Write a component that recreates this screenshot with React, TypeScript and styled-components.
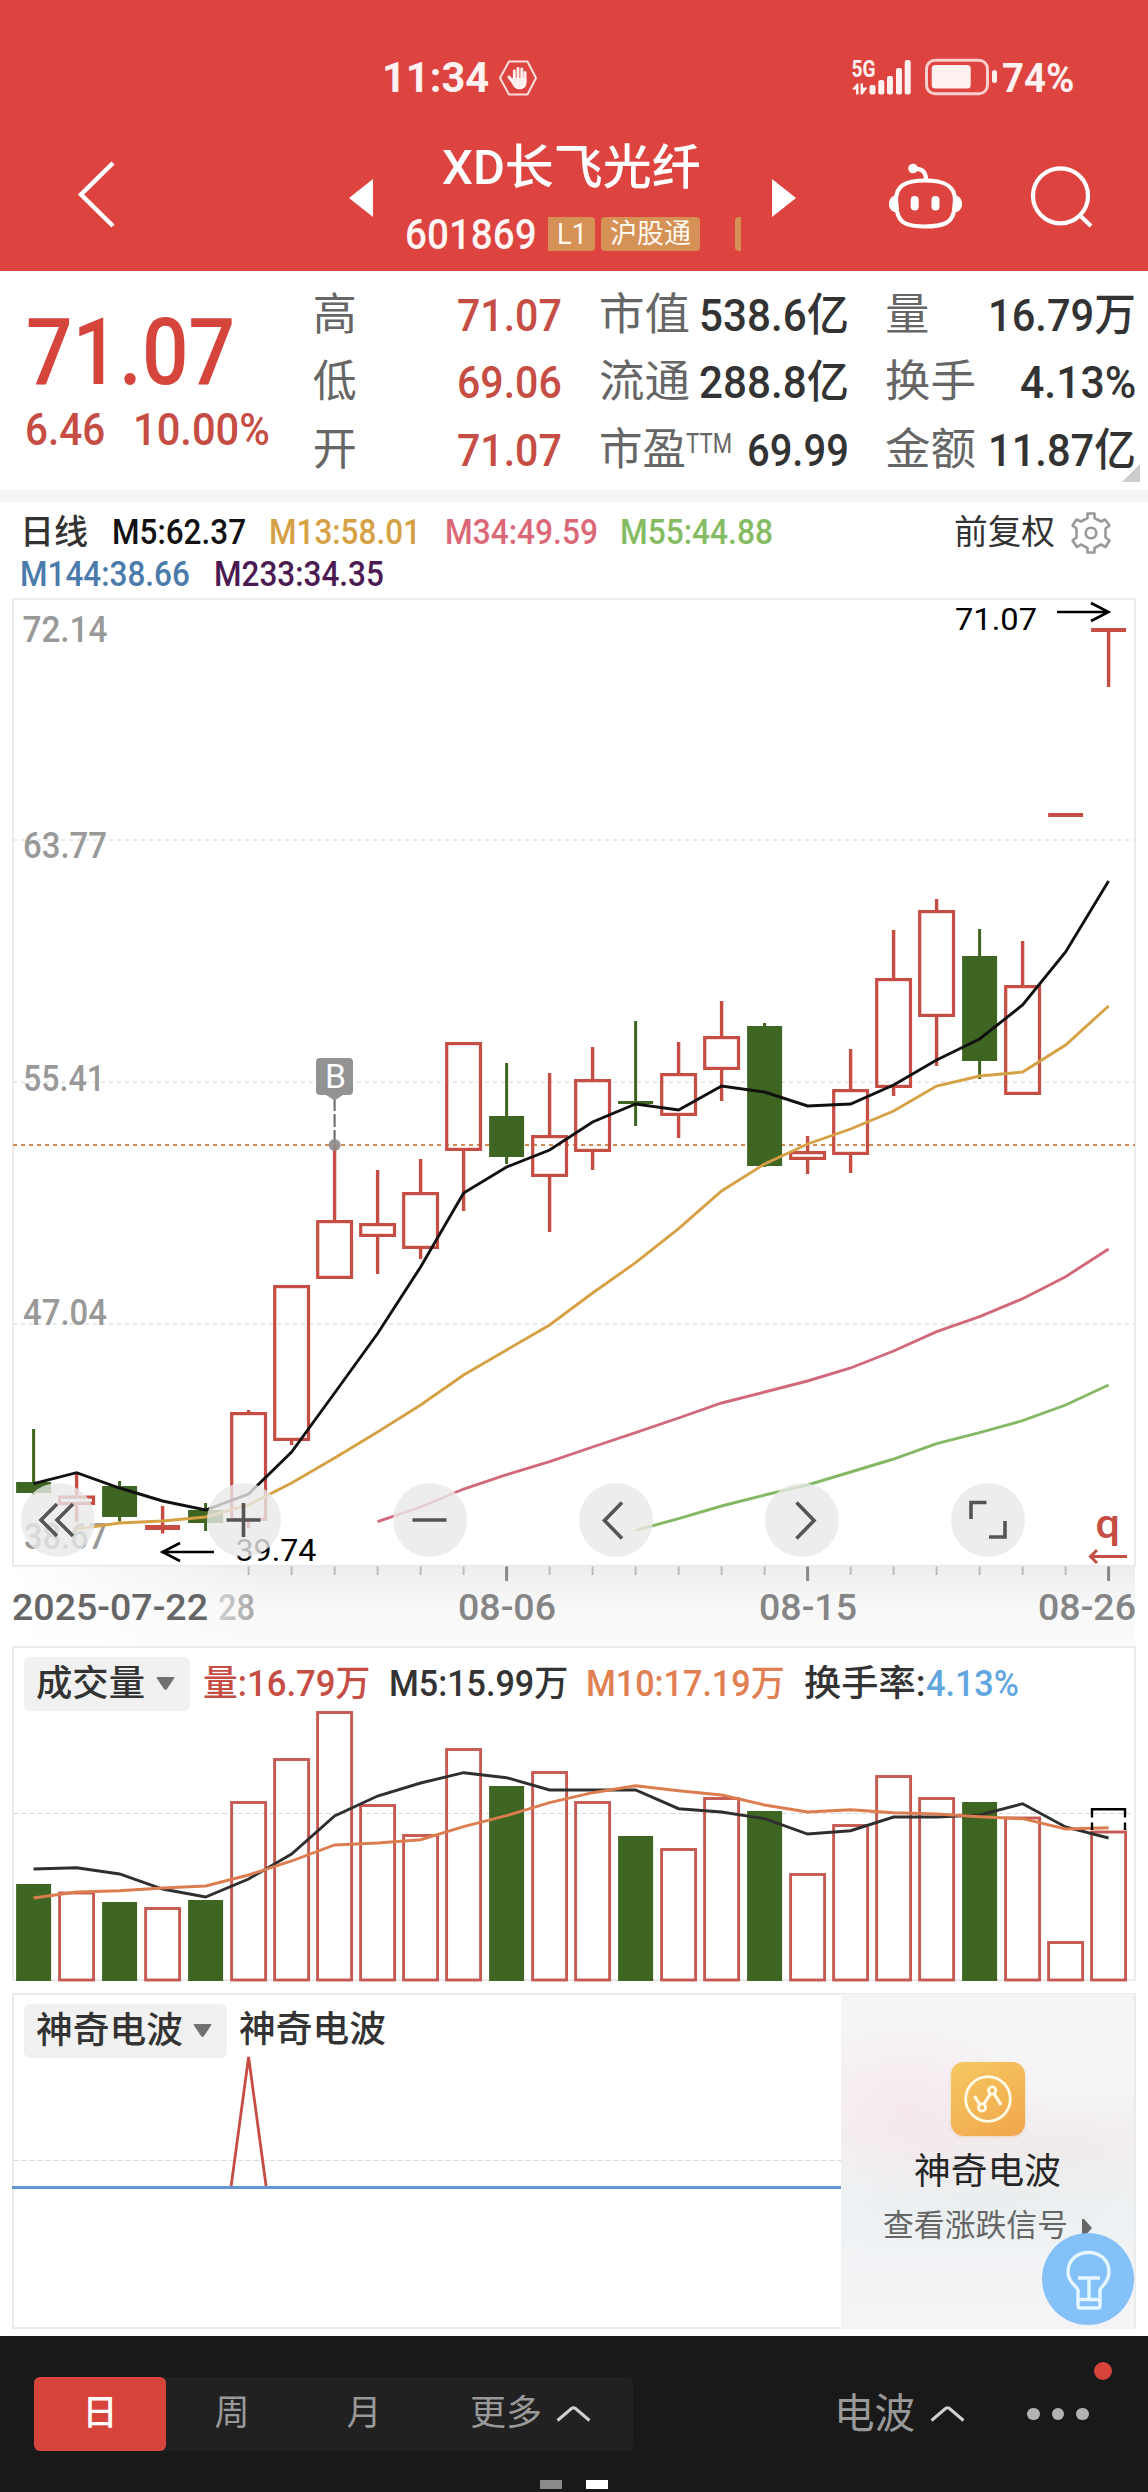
import React, { useLayoutEffect, useRef, useState } from "react";
import styled, { createGlobalStyle } from "styled-components";

const FONT = `Roboto, "Noto Sans CJK SC", sans-serif`;
const RED = "#c64d44";
const GREEN = "#3f6522";
const INK = "#333333";

const GlobalStyle = createGlobalStyle`
  * { box-sizing: border-box; }
  body { margin: 0; background: #fff; font-family: ${FONT}; }
  svg { display: block; flex: none; }
`;

/* ---------- condensed text: squeezes a line to the width it is given ---------- */

const FitBox = styled.span<{ $w: number; $size: number; $color: string; $weight: number; $lh?: number; $ml?: number }>`
  display: block;
  flex: none;
  width: ${(p) => p.$w}px;
  margin-left: ${(p) => p.$ml ?? 0}px;
  font-size: ${(p) => p.$size}px;
  font-weight: ${(p) => p.$weight};
  line-height: ${(p) => p.$lh ?? Math.round(p.$size * 1.2)}px;
  color: ${(p) => p.$color};
`;
const FitInner = styled.span`
  display: inline-block;
  vertical-align: top;
  white-space: nowrap;
  transform-origin: 0 50%;
`;

type FitProps = { w: number; size: number; color?: string; weight?: number; lh?: number; ml?: number; children: React.ReactNode };
function Fit({ w, size, color = INK, weight = 500, lh, ml, children }: FitProps) {
  const ref = useRef<HTMLSpanElement>(null);
  const [scale, setScale] = useState(1);
  useLayoutEffect(() => {
    if (ref.current) setScale(w / ref.current.offsetWidth);
  }, [w, size]);
  return (
    <FitBox $w={w} $size={size} $color={color} $weight={weight} $lh={lh} $ml={ml}>
      <FitInner ref={ref} style={{ transform: `scaleX(${scale})` }}>{children}</FitInner>
    </FitBox>
  );
}

/* ---------- header ---------- */

const Screen = styled.main`
  width: 1148px;
  height: 2492px;
  display: flex;
  flex-direction: column;
  background: #fff;
  overflow: hidden;
`;
const Header = styled.header`
  height: 271px;
  flex: none;
  background: #dd4440;
  padding-top: 54px;
`;
const StatusBar = styled.div`
  height: 48px;
  padding: 0 74px 0 382px;
  display: flex;
  align-items: center;
`;
const Spacer = styled.div`
  flex: 1;
`;
const NavRow = styled.nav`
  display: flex;
  align-items: flex-start;
  padding: 32px 54px 0 77px;
`;
const NavIcon = styled.div<{ $mt: number; $ml: number }>`
  margin: ${(p) => p.$mt}px 0 0 ${(p) => p.$ml}px;
`;
const TitleBlock = styled.div`
  width: 399px;
  display: flex;
  flex-direction: column;
`;
const TitleLine = styled.div`
  height: 66px;
  padding: 2px 0 0 69px;
`;
const CodeLine = styled.div`
  margin-top: 17px;
  height: 34px;
  padding-left: 32px;
  display: flex;
  align-items: center;
`;
const Tag = styled.div<{ $w: number; $ml: number; $r: string }>`
  width: ${(p) => p.$w}px;
  height: 34px;
  margin-left: ${(p) => p.$ml}px;
  border-radius: ${(p) => p.$r};
  background: #d69156;
  display: flex;
  align-items: center;
  justify-content: center;
`;

function StatusIcons() {
  return (
    <svg width="151" height="48" viewBox="850 54 151 48" fill="#fff1f0">
      <text x="851.5" y="76.5" fontFamily={FONT} fontWeight="700" fontSize="23" textLength="24" lengthAdjust="spacingAndGlyphs">5G</text>
      <path d="M852 89.500 L857 83.500 H858.500 V94.500 H856 V89.500 Z M860.500 83.500 H863 V87.500 H867.500 L862.500 94.500 H860.500 Z" />
      <rect x="869.5" y="85" width="6" height="9.5" rx="2" />
      <rect x="878.3" y="80" width="6" height="14.5" rx="2" />
      <rect x="887" y="76" width="6" height="18.5" rx="2" />
      <rect x="896" y="68" width="6" height="26.5" rx="2" />
      <rect x="904.7" y="60" width="6" height="34.5" rx="2" />
      <rect x="926.5" y="60.3" width="61" height="33.4" rx="8.5" fill="none" stroke="#f9cfcd" strokeWidth="3" />
      <rect x="931.7" y="65" width="39" height="23.5" rx="3.5" />
      <rect x="992" y="70" width="5" height="13" rx="2.5" />
    </svg>
  );
}

function HandIcon() {
  return (
    <svg width="40" height="38" viewBox="498 59 40 38">
      <path d="M509 61.5 H527.5 L536 78 L527.5 94.5 H509 L500 78 Z" fill="none" stroke="#fbdedd" strokeWidth="2" strokeLinejoin="round" />
      <path d="M509 77 L514.5 84" stroke="#fff1f0" strokeWidth="3" strokeLinecap="round" />
      <path d="M514.3 71 V80 M518 68.5 V80 M521.8 69 V80 M525 72.5 V82" stroke="#fff1f0" strokeWidth="2.9" strokeLinecap="round" />
      <path d="M512.5 78 H526.4 V83 C526.4 87 523.5 89.3 519 89.3 C515.5 89.3 512.8 86.5 511.5 82 Z" fill="#fff1f0" />
    </svg>
  );
}

/* ---------- quote panel ---------- */

const Quote = styled.section`
  height: 219px;
  flex: none;
  position: relative;
  display: flex;
  padding: 11px 12px 0 27px;
`;
const PriceCol = styled.div`
  width: 287px;
  padding-top: 21px;
`;
const ChangeRow = styled.div`
  display: flex;
`;
const StatCol = styled.div<{ $w: number; $ml: number }>`
  width: ${(p) => p.$w}px;
  margin-left: ${(p) => p.$ml}px;
`;
const StatRow = styled.div`
  height: 67.3px;
  display: flex;
  align-items: center;
`;
const Corner = styled.i`
  position: absolute;
  right: 8px;
  bottom: 8px;
  border-style: solid;
  border-width: 0 0 18px 18px;
  border-color: transparent transparent #cccccc transparent;
`;
const Divider = styled.div`
  height: 12px;
  flex: none;
  background: #f4f4f4;
`;

type Stat = { k: string; kw: number; v: string; vw: number; red?: boolean; sup?: boolean };
const stats: Stat[][] = [
  [
    { k: "高", kw: 44, v: "71.07", vw: 105, red: true },
    { k: "低", kw: 44, v: "69.06", vw: 105, red: true },
    { k: "开", kw: 44, v: "71.07", vw: 105, red: true },
  ],
  [
    { k: "市值", kw: 91, v: "538.6亿", vw: 150 },
    { k: "流通", kw: 91, v: "288.8亿", vw: 150 },
    { k: "市盈", kw: 87, v: "69.99", vw: 102, sup: true },
  ],
  [
    { k: "量", kw: 44, v: "16.79万", vw: 148 },
    { k: "换手", kw: 91, v: "4.13%", vw: 116 },
    { k: "金额", kw: 91, v: "11.87亿", vw: 148 },
  ],
];
const Sup = styled.div`
  align-self: flex-start;
  margin-top: 10px;
`;

/* ---------- moving average legend ---------- */

const Legend = styled.section`
  height: 96px;
  flex: none;
  padding: 9px 36px 0 20px;
`;
const LegendRow = styled.div<{ $h: number }>`
  height: ${(p) => p.$h}px;
  display: flex;
  align-items: center;
`;

/* ---------- chart geometry ---------- */

const cx = (i: number) => 33.6 + 43 * i;
type Candle = [up: 0 | 1, high: number, top: number, bottom: number, low: number];
const candles: Candle[] = [
  [0, 1429, 1482, 1493, 1495], [1, 1473, 1495.5, 1505, 1522], [0, 1481, 1486, 1517, 1521.5],
  [1, 1506, 1525, 1530, 1533.5], [0, 1503, 1510, 1523, 1531], [1, 1410, 1412, 1521, 1528],
  [1, 1285, 1285, 1441, 1445], [1, 1145, 1220, 1279, 1279], [1, 1170, 1223, 1237, 1274],
  [1, 1159, 1192, 1249, 1259], [1, 1042, 1042, 1151, 1211], [0, 1063, 1116, 1157, 1164],
  [1, 1073, 1135, 1177, 1232], [1, 1047, 1079, 1152, 1170], [0, 1021, 1101, 1104, 1126],
  [1, 1042, 1073, 1116, 1138], [1, 1001, 1036, 1070, 1101], [0, 1023, 1026, 1166, 1167],
  [1, 1136, 1151, 1160, 1174], [1, 1049, 1089, 1155, 1173], [1, 930, 978, 1088, 1096],
  [1, 899, 910, 1017, 1066], [0, 929, 956, 1061, 1079], [1, 941, 985, 1095, 1095],
  [1, 813, 813, 817, 817], [1, 628, 628, 632, 687],
];
const ma5 = [1483.7, 1472.7, 1488, 1501, 1510, 1494, 1452, 1393, 1333.5, 1267, 1193, 1167, 1150, 1122, 1104, 1110, 1086, 1092, 1106, 1104, 1085, 1060, 1039, 1005, 952, 881];
const ma13 = [1529, 1523, 1521, 1517, 1505, 1483, 1458, 1432, 1405, 1375, 1350, 1325, 1293, 1262.7, 1228.7, 1191, 1164, 1144, 1129, 1111, 1086, 1076, 1072, 1045, 1006];
const ma34 = [1521.6, 1507, 1489, 1474.7, 1461.6, 1447, 1432.7, 1418, 1403, 1392, 1381, 1368, 1351, 1331.7, 1316.7, 1298.7, 1276.7, 1249];
const ma55 = [1530.3, 1518.7, 1506, 1495, 1485, 1472, 1459, 1443.7, 1432.7, 1420.7, 1405, 1385];
const pts = (ys: number[], start: number) => ys.map((y, i) => `${cx(start + i)},${y}`).join(" ");

type LabelProps = { x: number; y: number; w: number; size: number; fill: string; weight?: number; children: React.ReactNode };
const Label = ({ x, y, w, size, fill, weight = 500, children }: LabelProps) => (
  <text x={x} y={y} fontFamily={FONT} fontSize={size} fontWeight={weight} fill={fill} textLength={w} lengthAdjust="spacingAndGlyphs">{children}</text>
);

function CandleMark({ i, c }: { i: number; c: Candle }) {
  const [up, high, top, bottom, low] = c;
  const x = cx(i);
  if (!up)
    return (
      <g fill={GREEN}>
        <rect x={x - 1.5} y={high} width="3" height={low - high} />
        <rect x={x - 17.5} y={top} width="35" height={bottom - top} />
      </g>
    );
  const thin = bottom - top < 8;
  return (
    <g>
      {top > high && <rect x={x - 1.7} y={high} width="3.4" height={top - high} fill={RED} />}
      {low > bottom && <rect x={x - 1.7} y={bottom} width="3.4" height={low - bottom} fill={RED} />}
      {thin ? (
        <rect x={x - 17.5} y={top} width="35" height={bottom - top} fill={RED} />
      ) : (
        <rect x={x - 16.9} y={top + 1.6} width="33.8" height={bottom - top - 3.2} fill="none" stroke={RED} strokeWidth="3.2" />
      )}
    </g>
  );
}

const ChartArea = styled.section`
  height: 1048px;
  flex: none;
  position: relative;
`;
const Controls = styled.div`
  position: absolute;
  left: 21px;
  top: 885px;
  display: flex;
  gap: 112px;
`;
const RoundButton = styled.button`
  width: 74px;
  height: 74px;
  padding: 0;
  border: 0;
  border-radius: 50%;
  background: rgba(232, 232, 232, 0.8);
  svg { fill: none; stroke: #555; stroke-width: 3.6; }
`;
const controlPaths = [
  "M36 21 L20 37 L36 53 M52 21 L36 37 L52 53",
  "M19.5 37 H53.5 M36.5 20 V54",
  "M19.5 37 H53.5",
  "M43 19.5 L25.5 37.5 L43 55.5",
  "M31.5 19.5 L49 37.5 L31.5 55.5",
  "M35.5 19.5 H20 V36 M38 54 H54 V38",
];

function PriceChart() {
  return (
    <svg width="1148" height="1048" viewBox="0 598 1148 1048">
      <defs>
        <linearGradient id="axisV" x1="0" y1="0" x2="0" y2="1">
          <stop offset="0" stopColor="#eeeeee" />
          <stop offset="0.5" stopColor="#f8f8f8" />
          <stop offset="1" stopColor="#fafafa" />
        </linearGradient>
        <linearGradient id="axisH" x1="0" y1="0" x2="1" y2="0">
          <stop offset="0" stopColor="#fff" />
          <stop offset="1" stopColor="#fff" stopOpacity="0" />
        </linearGradient>
        <linearGradient id="fade28" x1="0" y1="0" x2="1" y2="0">
          <stop offset="0" stopColor="#d2d2d2" />
          <stop offset="1" stopColor="#a6a6a6" />
        </linearGradient>
      </defs>
      <rect x="14" y="1566" width="1121" height="80" fill="url(#axisV)" />
      <rect x="13" y="1566" width="250" height="80" fill="url(#axisH)" />
      <rect x="13" y="599.2" width="1122" height="966.6" fill="none" stroke="#ebebeb" strokeWidth="2" />
      {[840, 1082, 1324].map((y) => (
        <path key={y} d={`M13 ${y} H1135`} stroke="#e9e9e9" strokeWidth="2" strokeDasharray="4 4" />
      ))}
      <path d="M13 1145 H1135" stroke="#cf8a56" strokeWidth="2" strokeDasharray="4 4" />
      {candles.map((c, i) => <CandleMark key={i} i={i} c={c} />)}
      <Label x={22.5} y={642} w={85} size={36} fill="#999">72.14</Label>
      <Label x={23} y={858} w={84} size={36} fill="#999">63.77</Label>
      <Label x={23} y={1091.3} w={82} size={36} fill="#999">55.41</Label>
      <Label x={23} y={1324.5} w={84} size={36} fill="#999">47.04</Label>
      <Label x={24} y={1548.5} w={83} size={36} fill="#999">38.67</Label>
      <g fill="none" strokeWidth="2.9">
        <polyline points={pts(ma5, 0)} stroke="#111" />
        <polyline points={pts(ma13, 1)} stroke="#d6a145" />
        <polyline points={pts(ma34, 8)} stroke="#d2697a" />
        <polyline points={pts(ma55, 14)} stroke="#85b865" />
      </g>
      <path d="M334.6 1098 V1145" stroke="#666" strokeWidth="2" strokeDasharray="13 3" />
      <circle cx="334.6" cy="1145" r="6" fill="#8d8d8d" opacity="0.9" />
      <path d="M320 1058 H349 Q353 1058 353 1062 V1091 Q353 1095 349 1095 H343 L334.6 1100.5 L326 1095 H320 Q316 1095 316 1091 V1062 Q316 1058 320 1058 Z" fill="#939393" />
      <Label x={325} y={1087.5} w={21} size={33} fill="#fff" weight={400}>B</Label>
      <Label x={955} y={629.8} w={82} size={32} fill="#000" weight={400}>71.07</Label>
      <path d="M1057 612 H1108 M1091 603 L1108.5 612 L1091 621" stroke="#000" strokeWidth="2.6" fill="none" />
      <Label x={235.5} y={1561} w={81} size={31} fill="#000" weight={400}>39.74</Label>
      <path d="M214 1552 H163 M180 1543 L162.5 1552 L180 1561" stroke="#000" strokeWidth="2.6" fill="none" />
      <Label x={1095.5} y={1537.5} w={24.5} size={40} fill={RED}>q</Label>
      <path d="M1127 1556.5 H1091 M1097 1550 L1090.5 1556.5 L1097 1563" stroke={RED} strokeWidth="3" fill="none" />
      {Array.from({ length: 21 }, (_, k) => k + 5).map((i) => {
        const major = i === 11 || i === 18 || i === 25;
        return <path key={i} d={`M${cx(i)} 1566.5 V${major ? 1581 : 1575}`} stroke={major ? "#888" : "#bbb"} strokeWidth={major ? 3 : 2} />;
      })}
      <Label x={12} y={1619.7} w={196} size={36} fill="#666">2025-07-22</Label>
      <Label x={218} y={1619.7} w={37} size={36} fill="url(#fade28)">28</Label>
      <Label x={458} y={1619.7} w={98} size={36} fill="#858585">08-06</Label>
      <Label x={759} y={1619.7} w={98} size={36} fill="#858585">08-15</Label>
      <Label x={1038} y={1619.7} w={98} size={36} fill="#858585">08-26</Label>
    </svg>
  );
}

/* ---------- indicator panes ---------- */

const Pane = styled.section<{ $h: number; $mt: number }>`
  height: ${(p) => p.$h}px;
  margin: ${(p) => p.$mt}px 12px 0 12px;
  flex: none;
  display: flex;
  flex-direction: column;
  border: 2px solid #ebebeb;
`;
const PaneHead = styled.div<{ $pt: number; $h: number }>`
  height: ${(p) => p.$h}px;
  padding: ${(p) => p.$pt}px 0 0 10px;
  display: flex;
`;
const Chip = styled.div<{ $w: number }>`
  width: ${(p) => p.$w}px;
  height: 54px;
  border-radius: 6px;
  background: #f1f1f1;
  display: flex;
  align-items: center;
  justify-content: space-between;
  padding: 0 15px 0 12px;
`;
const Caret = () => (
  <svg width="19" height="14" viewBox="0 0 19 14"><path d="M1.5 0 H17.5 Q19 0 18 1.6 L11 12 Q9.5 14 8 12 L1 1.6 Q0 0 1.5 0 Z" fill="#707070" /></svg>
);

const volumes: [up: 0 | 1, top: number][] = [
  [0, 1884], [1, 1891.5], [0, 1902], [1, 1907], [0, 1900], [1, 1801], [1, 1758], [1, 1711], [1, 1804],
  [1, 1834], [1, 1748], [0, 1786], [1, 1771], [1, 1801], [0, 1836], [1, 1848], [1, 1797], [0, 1811],
  [1, 1873], [1, 1824], [1, 1775], [1, 1797], [0, 1802], [1, 1816.5], [1, 1941], [1, 1830.5],
];
const v5 = [1869, 1867.7, 1874, 1889, 1897, 1879, 1854, 1816, 1796, 1783, 1772.7, 1777.7, 1790, 1790, 1790, 1808.7, 1812, 1818.7, 1834, 1830.7, 1817, 1817, 1815, 1803.7, 1827, 1838];
const v10 = [1898, 1892, 1890.7, 1888, 1886, 1875, 1861, 1845, 1843, 1839.7, 1826.7, 1815.7, 1802.7, 1792.7, 1785.7, 1790.7, 1795, 1805, 1812, 1809.7, 1812.7, 1814, 1816.7, 1818.7, 1829, 1827.7];

function VolumeChart() {
  return (
    <svg width="1120" height="274" viewBox="14 1709 1120 274" overflow="visible">
      <path d="M14 1813.5 H1134" stroke="#d6d6d6" strokeWidth="1.2" strokeDasharray="5 3" />
      {volumes.map(([up, top], i) =>
        up ? (
          <rect key={i} x={cx(i) - 17} y={top + 1.5} width="34" height={1980 - top - 1.5} fill="none" stroke="#c65a52" strokeWidth="2.9" />
        ) : (
          <rect key={i} x={cx(i) - 17.5} y={top} width="35" height={1981 - top} fill={GREEN} />
        )
      )}
      <g fill="none" strokeWidth="2.9">
        <polyline points={pts(v5, 0)} stroke="#2f2f2f" />
        <polyline points={pts(v10, 0)} stroke="#dc7d50" />
      </g>
      <path d="M1092 1817.5 V1809.3 H1125 V1817.5 M1092 1822.5 V1830 M1125 1822.5 V1830" stroke="#000" strokeWidth="2.4" fill="none" />
    </svg>
  );
}

const WaveBody = styled.div`
  display: flex;
  height: 333px;
`;
const WaveMain = styled.div`
  width: 827px;
  flex: none;
`;
const Promo = styled.div`
  width: 293px;
  height: 335px;
  margin-top: -1px;
  position: relative;
  padding-top: 68px;
  display: flex;
  flex-direction: column;
  align-items: center;
  background:
    radial-gradient(ellipse 140px 90px at 22% 34%, rgba(245, 228, 235, 0.7), transparent),
    radial-gradient(ellipse 260px 60px at 70% 46%, rgba(238, 232, 231, 0.8), transparent),
    radial-gradient(ellipse 260px 60px at 50% 62%, rgba(230, 237, 238, 0.8), transparent),
    linear-gradient(#f5f5f5, #f6f4f6 30%, #f1f3f5 75%, #f5f3f6);
`;
const PromoIcon = styled.div`
  width: 74px;
  height: 74px;
  border-radius: 13px;
  background: linear-gradient(150deg, #f5c860, #f1a64c);
  box-shadow: 0 1px 3px rgba(200, 160, 80, 0.3);
`;
const PromoSub = styled.div`
  display: flex;
  align-items: center;
`;
const Bulb = styled.div`
  position: absolute;
  right: 0;
  bottom: 4px;
  width: 92px;
  height: 92px;
  border-radius: 50%;
  background: #84c1f8;
`;

/* ---------- bottom bar ---------- */

const Bottom = styled.footer`
  height: 156px;
  margin-top: 7px;
  flex: none;
  background: #191919;
  display: flex;
  flex-direction: column;
`;
const BottomRow = styled.div`
  height: 144px;
  padding: 41px 0 0 34px;
  display: flex;
`;
const Tabs = styled.div`
  width: 599px;
  height: 74px;
  display: flex;
  align-items: center;
  border-radius: 6px;
  background: #212121;
`;
const Tab = styled.div<{ $active?: boolean; $w: number }>`
  width: ${(p) => p.$w}px;
  height: 74px;
  display: flex;
  align-items: center;
  justify-content: center;
  gap: 14px;
  border-radius: 6px;
  background: ${(p) => (p.$active ? "#d6443b" : "transparent")};
`;
const WaveTab = styled.div`
  height: 74px;
  margin-left: 201px;
  display: flex;
  align-items: center;
  gap: 15px;
`;
const More = styled.div`
  position: relative;
  height: 74px;
  margin-left: 62px;
  display: flex;
  align-items: center;
  gap: 12px;
`;
const Dot = styled.i`
  width: 12.5px;
  height: 12.5px;
  border-radius: 50%;
  background: #b3b3b3;
`;
const Badge = styled.i`
  position: absolute;
  left: 67px;
  top: -15px;
  width: 18px;
  height: 18px;
  border-radius: 50%;
  background: #d6443b;
`;
const Pager = styled.div`
  display: flex;
  gap: 24.5px;
  padding-left: 540px;
`;
const PagerMark = styled.i<{ $on?: boolean }>`
  width: 21.5px;
  height: 9px;
  background: ${(p) => (p.$on ? "#fff" : "#8a8a8a")};
`;
const Chevron = () => (
  <svg width="35" height="18" viewBox="0 0 35 18" fill="none"><path d="M1.5 15.5 L15.5 3.5 Q17.5 2 19.5 3.5 L33.5 15.5" stroke="#cfcfcf" strokeWidth="3" /></svg>
);

export default function App() {
  return (
    <Screen>
      <GlobalStyle />
      <Header>
        <StatusBar>
          <Fit w={107} size={42} color="#fff1f0" weight={700} lh={48}>11:34</Fit>
          <NavIcon $mt={0} $ml={9}><HandIcon /></NavIcon>
          <Spacer />
          <StatusIcons />
          <Fit w={72} size={41} color="#fff1f0" weight={700} lh={49} ml={1}>74%</Fit>
        </StatusBar>
        <NavRow>
          <NavIcon $mt={26} $ml={0}>
            <svg width="40" height="70" viewBox="77 161 40 70" fill="none"><path d="M113 164 L81 195.5 L113 227" stroke="#fff" strokeWidth="4.5" /></svg>
          </NavIcon>
          <NavIcon $mt={45} $ml={232}>
            <svg width="24" height="38" viewBox="0 0 24 38"><path d="M24 0 V38 L0 19 Z" fill="#fff" /></svg>
          </NavIcon>
          <TitleBlock>
            <TitleLine><Fit w={259} size={48} color="#fff" weight={500} lh={64}>XD长飞光纤</Fit></TitleLine>
            <CodeLine>
              <Fit w={132} size={43} color="#fff5f4" weight={500} lh={34}>601869</Fit>
              <Tag $w={47} $ml={11} $r="0 4px 4px 0"><Fit w={30} size={30} color="#fff9f0" weight={400} lh={34}>L1</Fit></Tag>
              <Tag $w={99} $ml={6} $r="4px"><Fit w={81} size={27} color="#fff9f0" weight={400} lh={34}>沪股通</Fit></Tag>
              <Tag $w={6} $ml={35} $r="4px 0 0 4px" />
            </CodeLine>
          </TitleBlock>
          <NavIcon $mt={45} $ml={0}>
            <svg width="24" height="38" viewBox="0 0 24 38"><path d="M0 0 V38 L24 19 Z" fill="#fff" /></svg>
          </NavIcon>
          <NavIcon $mt={28} $ml={91}>
            <svg width="76" height="70" viewBox="887 162 76 70" fill="none" stroke="#fff" strokeWidth="4.2">
              <path d="M896 200 C896 186 905 180.500 925 180.500 C945 180.500 955 186 955 200 L954 211 C952 223 943 226.500 925 226.500 C907 226.500 899 223 897 211 Z" />
              <path d="M895 196 Q889.500 197 889.500 204 Q889.500 211 896 212 Z M956 196 Q961.500 197 961.500 204 Q961.500 211 955 212 Z" fill="#fff" strokeWidth="1" />
              <path d="M914 169 C922 168 926 172 926 180" />
              <circle cx="913" cy="168.500" r="4.800" fill="#fff" stroke="none" />
              <rect x="910.700" y="196" width="8" height="14.500" rx="4" fill="#fff" stroke="none" />
              <rect x="931.500" y="196" width="8" height="14.500" rx="4" fill="#fff" stroke="none" />
            </svg>
          </NavIcon>
          <NavIcon $mt={30} $ml={66}>
            <svg width="64" height="66" viewBox="1029 164 64 66" fill="none" stroke="#fff" strokeWidth="4.2"><circle cx="1060.500" cy="195.800" r="27.500" /><path d="M1079.500 215 L1091 226" /></svg>
          </NavIcon>
        </NavRow>
      </Header>

      <Quote>
        <PriceCol>
          <Fit w={209} size={92.5} color="#d5453c" lh={100} ml={-1}>71.07</Fit>
          <ChangeRow>
            <Fit w={80} size={45} color={RED} lh={54} ml={-2}>6.46</Fit>
            <Fit w={137} size={45} color={RED} lh={54} ml={28}>10.00%</Fit>
          </ChangeRow>
        </PriceCol>
        {stats.map((col, ci) => (
          <StatCol key={ci} $w={[250, 250, 251][ci]} $ml={[-1, 37, 36][ci]}>
            {col.map((s) => (
              <StatRow key={s.k}>
                <Fit w={s.kw} size={44} color="#666" weight={400} lh={61}>{s.k}</Fit>
                {s.sup && <Sup><Fit w={46} size={27} color="#666" weight={400} lh={34}>TTM</Fit></Sup>}
                <Spacer />
                <Fit w={s.vw} size={45} color={s.red ? RED : INK} lh={61}>{s.v}</Fit>
              </StatRow>
            ))}
          </StatCol>
        ))}
        <Corner />
      </Quote>
      <Divider />

      <Legend>
        <LegendRow $h={43}>
          <Fit w={68} size={34} lh={43}>日线</Fit>
          <Fit w={134} size={35} color="#111" lh={43} ml={24}>M5:62.37</Fit>
          <Fit w={152} size={35} color="#d6a145" lh={43} ml={23}>M13:58.01</Fit>
          <Fit w={153} size={35} color="#db6877" lh={43} ml={24}>M34:49.59</Fit>
          <Fit w={153} size={35} color="#85bb62" lh={43} ml={22}>M55:44.88</Fit>
          <Spacer />
          <Fit w={101} size={34} weight={400} lh={43}>前复权</Fit>
          <NavIcon $mt={1} $ml={15}>
            <svg width="42" height="42" viewBox="0 0 42 42" fill="none" stroke="#999" strokeWidth="2.6" strokeLinejoin="round">
              <path d="M17.500 6 V1.500 H24.500 V6 L31 9.500 L35 7.500 L39.500 13.500 L35.500 16.500 V25.500 L39.500 28.500 L35.500 35 L31 32.500 L24.500 36 V40.500 H17.500 V36 L11 32.500 L7 35 L2.500 28.500 L6.500 25.500 V16.500 L2.500 13.500 L6.500 7.500 L11 9.500 Z" />
              <circle cx="21" cy="21" r="5.300" />
            </svg>
          </NavIcon>
        </LegendRow>
        <LegendRow $h={41}>
          <Fit w={170} size={35} color="#4a7bab" lh={41}>M144:38.66</Fit>
          <Fit w={170} size={35} color="#4b1a52" lh={41} ml={24}>M233:34.35</Fit>
        </LegendRow>
      </Legend>

      <ChartArea>
        <PriceChart />
        <Controls>
          {controlPaths.map((d, i) => (
            <RoundButton key={i}><svg width="74" height="74" viewBox="0 0 74 74"><path d={d} /></svg></RoundButton>
          ))}
        </Controls>
      </ChartArea>

      <Pane $h={335} $mt={0}>
        <PaneHead $pt={9} $h={61}>
          <Chip $w={166}><Fit w={109} size={36} lh={54}>成交量</Fit><Caret /></Chip>
          <Fit w={167} size={36} color={RED} lh={54} ml={13}>量:16.79万</Fit>
          <Fit w={179} size={36} lh={54} ml={19}>M5:15.99万</Fit>
          <Fit w={199} size={36} color="#e07f52" lh={54} ml={18}>M10:17.19万</Fit>
          <Fit w={122} size={36} lh={54} ml={19}>换手率:</Fit>
          <Fit w={93} size={36} color="#62a6e0" lh={54}>4.13%</Fit>
        </PaneHead>
        <VolumeChart />
      </Pane>

      <Pane $h={336} $mt={12}>
        <WaveBody>
          <WaveMain>
            <PaneHead $pt={9} $h={62}>
              <Chip $w={203}><Fit w={147} size={36} lh={54}>神奇电波</Fit><Caret /></Chip>
              <Fit w={147} size={36} lh={53} ml={12}>神奇电波</Fit>
            </PaneHead>
            <svg width="828" height="271" viewBox="14 2057 828 271" overflow="visible">
              <path d="M14 2160.500 H842" stroke="#d9d9d9" strokeWidth="1.200" strokeDasharray="5 3" />
              <path d="M231 2187 L248.600 2057 L266.200 2187" stroke={RED} strokeWidth="2.800" fill="none" strokeLinejoin="bevel" />
              <path d="M12 2187.500 H842" stroke="#6495d6" strokeWidth="3.2" />
            </svg>
          </WaveMain>
          <Promo>
            <PromoIcon>
              <svg width="74" height="74" viewBox="0 0 74 74" fill="none" stroke="#fffbe6" strokeWidth="2.8">
                <circle cx="37" cy="37" r="22.300" />
                <path d="M23.500 34 L29 43 M33 42 L39.500 31.500 M43 31.500 L50 43" strokeWidth="3.300" />
                <circle cx="31" cy="45.500" r="3.600" />
                <circle cx="41.200" cy="28.500" r="3.600" />
              </svg>
            </PromoIcon>
            <Fit w={147} size={36} color="#262626" weight={400} lh={73}>神奇电波</Fit>
            <PromoSub>
              <Fit w={185} size={31} color="#666" weight={400} lh={34}>查看涨跌信号</Fit>
              <NavIcon $mt={4} $ml={14}>
                <svg width="10" height="18" viewBox="0 0 10 18"><path d="M0 0 L2 0 L10 9 L2 18 L0 18 Z" fill="#666" /></svg>
              </NavIcon>
            </PromoSub>
            <Bulb>
              <svg width="92" height="92" viewBox="0 0 92 92" fill="none" stroke="#e6f7ff" strokeWidth="3.400" strokeLinejoin="round">
                <path d="M36 73 V57 C36 54 26 50 26 39 C26 27 35 19.500 46.500 19.500 C58 19.500 67 27 67 39 C67 50 58 54 58 57 V73 Q58 75 56 75 H38 Q36 75 36 73 Z M36 66.500 H58 M36 45 H58 M47 45 V66" />
              </svg>
            </Bulb>
          </Promo>
        </WaveBody>
      </Pane>

      <Bottom>
        <BottomRow>
          <Tabs>
            <Tab $w={132} $active><Fit w={35} size={35} color="#fff" weight={500} lh={76}>日</Fit></Tab>
            <Tab $w={132}><Fit w={35} size={35} color="#999" weight={400} lh={76}>周</Fit></Tab>
            <Tab $w={132}><Fit w={35} size={35} color="#999" weight={400} lh={76}>月</Fit></Tab>
            <Tab $w={201}><Fit w={72} size={35} color="#999" weight={400} lh={76}>更多</Fit><Chevron /></Tab>
          </Tabs>
          <WaveTab><Fit w={81} size={41} color="#999" weight={400} lh={76}>电波</Fit><Chevron /></WaveTab>
          <More><Dot /><Dot /><Dot /><Badge /></More>
        </BottomRow>
        <Pager><PagerMark /><PagerMark $on /></Pager>
      </Bottom>
    </Screen>
  );
}
